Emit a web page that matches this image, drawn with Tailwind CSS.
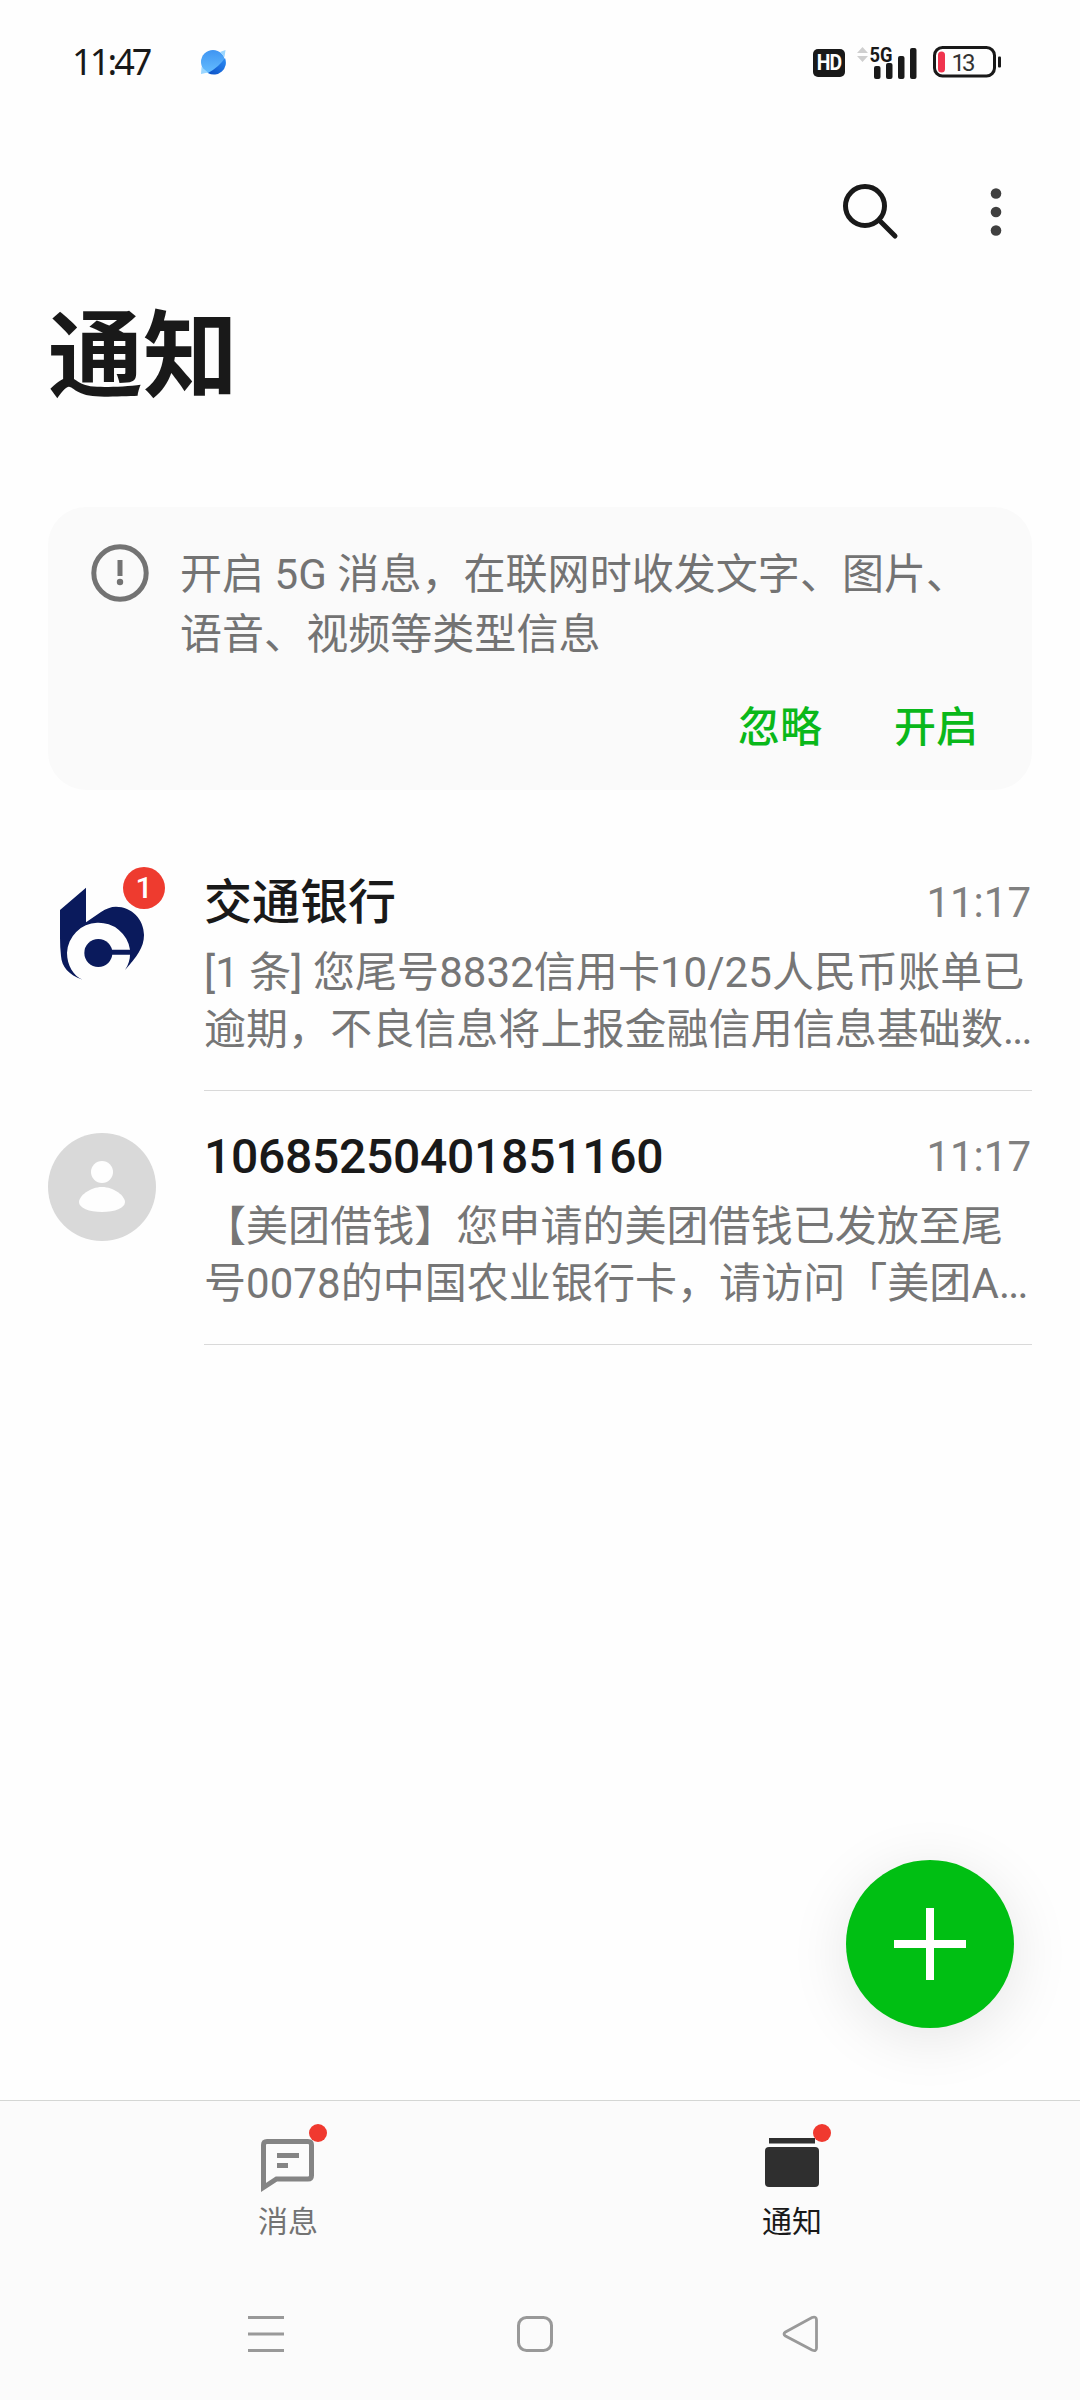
<!DOCTYPE html>
<html lang="zh-CN">
<head>
<meta charset="utf-8">
<title>通知</title>
<script src="https://cdn.jsdelivr.net/npm/@tailwindcss/browser@4"></script>
</head>
<body class="bg-[#fefefe]">
<div class="relative flex h-[2400px] w-[1080px] flex-col overflow-hidden bg-[#fefefe] font-[Roboto,'Noto_Sans_CJK_SC',sans-serif] text-[#191919]">

  <!-- Status bar -->
  <div class="flex h-[124px] items-center justify-between pl-[72px] pr-[79px]">
    <div class="flex items-center">
      <span class="w-[128px] font-['Noto_Sans',sans-serif] text-[36px] leading-[124px] tracking-[-2.9px]">11:47</span>
      <svg class="h-[26px] w-[26px]" viewBox="0 0 26 26">
        <defs>
          <linearGradient id="lite" x1="0" y1="0" x2="0" y2="1"><stop offset="0" stop-color="#3f95f2"/><stop offset="1" stop-color="#66beff"/></linearGradient>
          <linearGradient id="deep" x1="1" y1="0" x2="0" y2="1"><stop offset="0" stop-color="#2b8cf5"/><stop offset="1" stop-color="#0b4fc4"/></linearGradient>
        </defs>
        <circle cx="13" cy="13" r="12" fill="url(#lite)"/>
        <path d="M25 9A12 12 0 0 1 8 24Q19 18 25 9Z" fill="url(#deep)"/>
        <path d="M20 3L25.500 1L24.500 8ZM1.500 18L1 25L8 23.500Z" fill="#9ad6ff"/>
      </svg>
    </div>
    <div class="flex items-center">
      <div class="mt-[2px] flex h-[28px] w-[32px] items-center justify-center rounded-[5px] bg-[#191919] font-[Roboto] text-[22px] leading-none font-bold tracking-[-1px] text-white"><span class="origin-center scale-x-[0.88]">HD</span></div>
      <svg class="ml-[12px] h-[46px] w-[62px]" viewBox="0 -6 62 46">
        <path d="M0 8L5.500 2L11 8ZM0 11L5.500 17L11 11Z" fill="#cfcfcf"/>
        <text x="12.500" y="16.500" font-family="Roboto" font-weight="700" font-size="21" textLength="23" lengthAdjust="spacingAndGlyphs" fill="#191919">5G</text>
        <g fill="#191919"><rect x="17" y="21" width="6.500" height="13" rx="2"/><rect x="29" y="18" width="6.500" height="16" rx="2"/><rect x="41" y="11" width="6.500" height="23" rx="2"/><rect x="53" y="3" width="6.500" height="31" rx="2"/></g>
      </svg>
      <svg class="ml-[14px] h-[32px] w-[68px]" viewBox="0 0 68 32">
        <rect x="1.500" y="1.500" width="60" height="28.500" rx="8" fill="none" stroke="#191919" stroke-width="3"/>
        <rect x="65" y="10.500" width="3" height="11" rx="1" fill="#191919"/>
        <rect x="5" y="5.500" width="7" height="21" rx="3.500" fill="#f0344e"/>
        <text x="18.500" y="24.500" font-family="Roboto" font-size="24" textLength="24" fill="#333">13</text>
      </svg>
    </div>
  </div>

  <!-- Toolbar -->
  <div class="flex h-[176px] items-center justify-end pr-[78px]">
    <svg class="h-[58px] w-[58px]" viewBox="0 0 58 58" fill="none" stroke="#191919" stroke-width="5">
      <circle cx="24" cy="23" r="19.500"/><path d="M38 37L54 53" stroke-linecap="round"/>
    </svg>
    <svg class="ml-[91px] h-[58px] w-[12px]" viewBox="0 0 12 58" fill="#404040"><circle cx="6" cy="10.500" r="5.300"/><circle cx="6" cy="29" r="5.300"/><circle cx="6" cy="47.500" r="5.300"/></svg>
  </div>

  <h1 class="h-[207px] pt-[4px] pl-[48px] text-[95px] leading-[108px] font-bold">通知</h1>

  <!-- 5G message prompt -->
  <section class="mx-[48px] flex h-[283px] flex-col rounded-[38px] bg-[#fafafa] pt-[36px]">
    <div class="flex pl-[43px]">
      <svg class="mt-px h-[58px] w-[58px]" viewBox="0 0 58 58"><circle cx="29" cy="29" r="26.200" fill="none" stroke="#737373" stroke-width="5"/><path d="M26.500 16h5v16h-5z" fill="#737373"/><circle cx="29" cy="38" r="3.200" fill="#737373"/></svg>
      <p class="ml-[31px] pt-[2px] text-[42px] leading-[60px] tracking-[0.05px] whitespace-nowrap text-[#737373]">开启 5G 消息，在联网时收发文字、图片、<br>语音、视频等类型信息</p>
    </div>
    <div class="mt-[33px] flex justify-end gap-[72px] pr-[54px] text-[42px] leading-[60px] font-medium text-[#0ab81a]"><button>忽略</button><button>开启</button></div>
  </section>

  <!-- Conversations -->
  <main class="mt-[47px] px-[48px]">
    <article class="flex h-[254px]">
      <div class="relative w-[156px] shrink-0">
        <svg class="mt-[42px] ml-[2px] h-[108px] w-[108px]" viewBox="60 114 324 324" fill="#0a1a5c">
          <path d="M90 207L168 140V244L213 213C228 203 243 197 258 197C305 197 342 235 342 282C342 320 320 347 285 387C296 370 300 355 300 341H240V326H300A95 94 0 0 0 111 335C111 372 130 405 158 416C115 402 95 376 93 345Q90 320 90 290Z"/><circle cx="205" cy="336" r="42"/>
        </svg>
        <span class="absolute top-[30px] left-[75px] h-[42px] w-[42px] rounded-full bg-[#ee3b2f] text-center text-[30px] leading-[42px] font-medium text-white">1</span>
      </div>
      <div class="min-w-0 flex-1 border-b border-[#d9d9d9] pt-[34px]">
        <div class="flex justify-between leading-[64px]"><h2 class="text-[48px] font-medium">交通银行</h2><time class="pr-px text-[42px] text-[#808080]">11:17</time></div>
        <p class="mt-[9px] text-[42px] leading-[57px] tracking-[0.05px] whitespace-nowrap text-[#767676]">[1 条] 您尾号8832信用卡10/25人民币账单已<br>逾期，不良信息将上报金融信用信息基础数<span class="tracking-[-1.8px]">...</span></p>
      </div>
    </article>
    <article class="flex h-[254px]">
      <div class="w-[156px] shrink-0">
        <svg class="mt-[42px] h-[108px] w-[108px]" viewBox="0 0 108 108"><circle cx="54" cy="54" r="54" fill="#d9d9d9"/><g fill="#fefefe"><circle cx="54" cy="39" r="11"/><path d="M54 54C66 54 77 63 77 69C77 75 67 79 54 79C41 79 31 75 31 69C31 63 42 54 54 54Z"/></g></svg>
      </div>
      <div class="min-w-0 flex-1 border-b border-[#d9d9d9] pt-[34px]">
        <div class="flex justify-between leading-[64px]"><h2 class="text-[48px] font-medium tracking-[-0.27px]">10685250401851160</h2><time class="pr-px text-[42px] text-[#808080]">11:17</time></div>
        <p class="mt-[9px] text-[42px] leading-[57px] tracking-[0.05px] whitespace-nowrap text-[#767676]">【美团借钱】您申请的美团借钱已发放至尾<br>号0078的中国农业银行卡，请访问「美团A<span class="tracking-[-1.8px]">...</span></p>
      </div>
    </article>
  </main>

  <!-- Compose -->
  <button class="absolute top-[1860px] left-[846px] flex h-[168px] w-[168px] items-center justify-center rounded-full bg-[#00bf13] shadow-[0_10px_60px_rgba(0,0,0,0.1)]">
    <svg class="h-[72px] w-[72px]" viewBox="0 0 72 72" fill="#fff"><path d="M32 0h8v32h32v8H40v32h-8V40H0v-8h32z"/></svg>
  </button>

  <!-- Tabs and system navigation -->
  <footer class="mt-auto h-[300px] border-t border-[#d4d6d4] bg-[#fbfbfb]">
    <nav class="flex h-[180px] justify-center pt-[20px] text-[30px] leading-[46px]">
      <a class="flex w-[504px] flex-col items-center text-[#737373]">
        <svg class="h-[78px] w-[78px]" viewBox="0 0 78 78"><path d="M14.500 65V24Q14.500 20.500 18 20.500H59Q62.500 20.500 62.500 24V54.500Q62.500 58 59 58H27.500L14.500 66.500Z" fill="none" stroke="#848484" stroke-width="5"/><path d="M28 32h22v5H28zM28 42h11v5H28z" fill="#848484"/><circle cx="69" cy="12" r="9" fill="#f0392f"/></svg>
        <span>消息</span>
      </a>
      <a class="flex w-[504px] flex-col items-center text-[#191919]">
        <svg class="h-[78px] w-[78px]" viewBox="0 0 78 78"><path d="M16 17h46v5.500H16z" fill="#2f2f2f"/><rect x="12" y="26" width="54" height="40" rx="4" fill="#2f2f2f"/><circle cx="69" cy="12" r="9" fill="#f0392f"/></svg>
        <span>通知</span>
      </a>
    </nav>
    <div class="flex h-[105px] items-center justify-between pr-[259px] pl-[246px]">
      <svg class="h-[40px] w-[40px]" viewBox="0 0 40 40"><path d="M2 3.500H38M2 20H38M2 36.500H38" stroke="#999" stroke-width="3"/></svg>
      <svg class="ml-[2px] h-[40px] w-[40px]" viewBox="0 0 40 40"><rect x="3.500" y="3.500" width="33" height="33" rx="8" fill="none" stroke="#999" stroke-width="3"/></svg>
      <svg class="h-[40px] w-[40px]" viewBox="0 0 40 40"><path d="M4.500 18L31 3.500Q35.500 2 35.500 6V34Q35.500 38 31 36L4.500 22Q1.500 20 4.500 18Z" fill="none" stroke="#999" stroke-width="2.800"/></svg>
    </div>
  </footer>
</div>
</body>
</html>
